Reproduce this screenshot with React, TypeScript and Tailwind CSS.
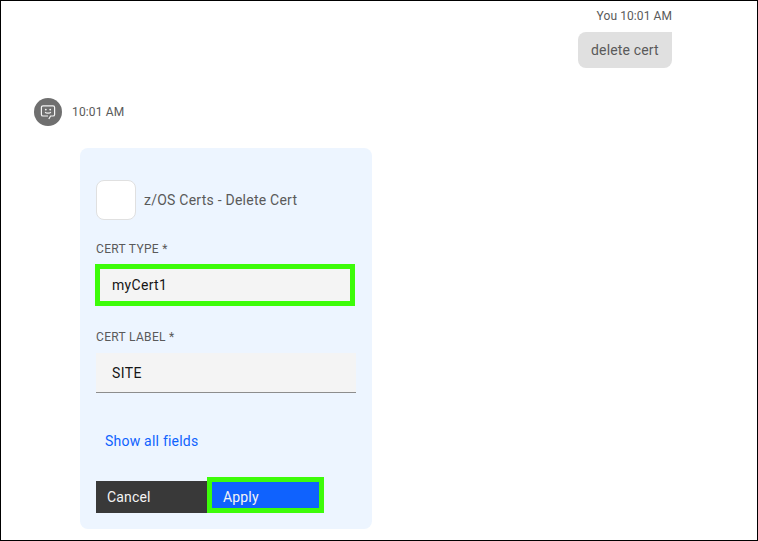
import React from "react";

function BotAvatar() {
  return (
    <div className="flex h-7 w-7 shrink-0 items-center justify-center rounded-full bg-[#6f6f6f]">
      <svg width="16" height="16" viewBox="0 0 16 16" fill="none" stroke="#f4f4f4" strokeWidth="1.2">
        <path d="M8.8 15 L10.6 12 H13 A1.6 1.6 0 0 0 14.6 10.4 V3.4 A1.6 1.6 0 0 0 13 1.8 H3 A1.6 1.6 0 0 0 1.4 3.4 V10.4 A1.6 1.6 0 0 0 3 12 H8" />
        <path d="M5.2 8 C6 9.6 10 9.6 10.8 8" />
        <circle cx="5.8" cy="5.6" r="0.9" fill="#f4f4f4" stroke="none" />
        <circle cx="10.2" cy="5.6" r="0.9" fill="#f4f4f4" stroke="none" />
      </svg>
    </div>
  );
}

export default function App() {
  return (
    <div className="h-[541px] w-[758px] overflow-hidden border border-black bg-white font-['Roboto','Liberation_Sans',sans-serif] text-[#5a5a5a]">
      <div className="flex flex-col items-end pr-[85px] pt-[7px]">
        <div className="text-[12px] leading-4 tracking-[0.08px]">You 10:01 AM</div>
        <div className="mt-2 flex h-9 w-[94px] items-center whitespace-nowrap rounded-lg rounded-tr-none bg-[#e0e0e0] pl-[13px] text-[14px] leading-[18px] tracking-[0.16px]">
          delete cert
        </div>
      </div>

      <div className="mt-[30px] flex items-center pl-[33px]">
        <BotAvatar />
        <div className="ml-[10px] text-[12px] leading-4 tracking-[0.16px]">10:01 AM</div>
      </div>

      <div className="ml-[79px] mt-[22px] flex h-[381px] w-[292px] flex-col rounded-lg bg-[#edf5ff] px-4 pt-8 text-[14px] leading-[18px]">
        <div className="flex items-center gap-2">
          <div className="h-10 w-10 rounded-lg border border-[#e0e0e0] bg-white" />
          <div className="tracking-[0.24px]">z/OS Certs - Delete Cert</div>
        </div>

        <div className="mt-[21px] text-[12px] leading-4 tracking-[0.32px]">CERT TYPE *</div>
        <div className="-ml-px mt-[7px] flex h-[42px] w-[260px] items-center border-[5px] border-[#3dfc09] bg-[#f4f4f4] pl-3 tracking-[0.3px] text-[#161616]">
          myCert1
        </div>

        <div className="mt-[23px] text-[12px] leading-4 tracking-[0.32px]">CERT LABEL *</div>
        <div className="mt-2 flex h-10 items-center border-b border-[#8d8d8d] bg-[#f4f4f4] pl-4 tracking-[0.4px] text-[#161616]">
          SITE
        </div>

        <div className="mt-[39px] pl-[9px] tracking-[0.22px] text-[#0f62fe]">Show all fields</div>

        <div className="mt-[27px] flex items-end text-[#f4f4f4]">
          <div className="flex h-8 w-[111px] items-center bg-[#393939] pl-[11px] tracking-[0.16px]">Cancel</div>
          <div className="flex h-9 w-[117px] items-center border-[5px] border-[#3dfc09] bg-[#0f62fe] pl-[11px] pt-1 tracking-[0.16px]">
            Apply
          </div>
        </div>
      </div>
    </div>
  );
}
